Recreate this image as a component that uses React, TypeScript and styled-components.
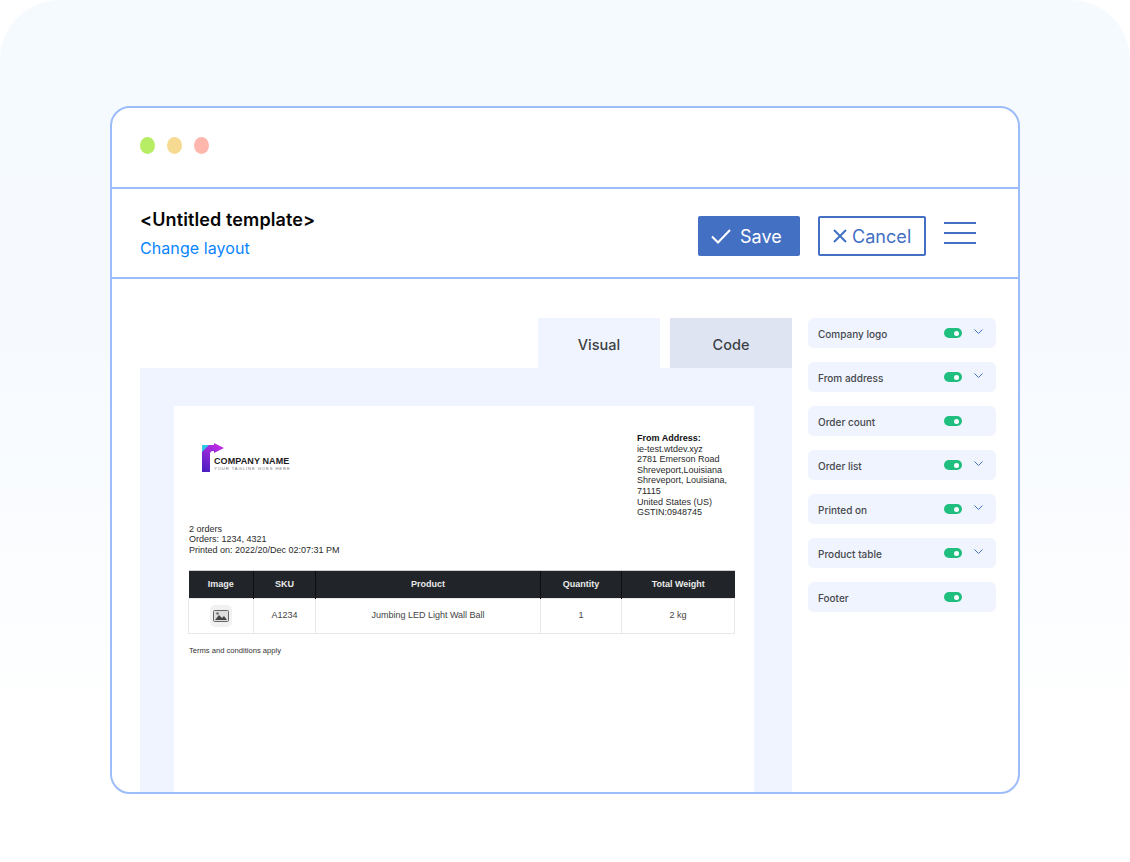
import React from "react";
import styled, { createGlobalStyle } from "styled-components";

const Global = createGlobalStyle`
  html, body { margin: 0; padding: 0; background: #fff; }
  body { font-family: Inter, "Liberation Sans", sans-serif; }
`;

const Page = styled.div`
  width: 1130px;
  height: 862px;
  box-sizing: border-box;
  padding: 106px 110px 68px;
  border-radius: 60px 60px 0 0;
  background: linear-gradient(180deg, #f5faff 0%, #f6faff 40%, #ffffff 85%);
  overflow: hidden;
`;

const Window = styled.div`
  height: 688px;
  box-sizing: border-box;
  display: flex;
  flex-direction: column;
  background: #fff;
  border: 2px solid #9dbdfa;
  border-radius: 20px;
  overflow: hidden;
`;

const TitleBar = styled.div`
  height: 81px;
  flex: none;
  box-sizing: border-box;
  padding: 29px 28px 0;
  display: flex;
  gap: 12px;
  align-items: flex-start;
  border-bottom: 2px solid #9dbdfa;
`;

const Dot = styled.span<{ $c: string }>`
  width: 15px;
  height: 17px;
  border-radius: 50%;
  background: ${(p) => p.$c};
`;

const Header = styled.div`
  height: 90px;
  flex: none;
  box-sizing: border-box;
  padding: 0 42px 0 28px;
  display: flex;
  align-items: center;
  justify-content: space-between;
  border-bottom: 2px solid #9dbdfa;
`;

const TitleBlock = styled.div`
  display: flex;
  flex-direction: column;
  gap: 7px;
`;

const Title = styled.div`
  font-size: 18px;
  line-height: 22px;
  font-weight: 600;
  letter-spacing: 0.11px;
  color: #050505;
`;

const LayoutLink = styled.a`
  font-size: 16px;
  line-height: 20px;
  letter-spacing: 0.08px;
  color: #0a84ff;
`;

const Actions = styled.div`
  display: flex;
  align-items: center;
  padding-top: 6px;
`;

const SaveButton = styled.button`
  width: 102px;
  height: 40px;
  margin-right: 18px;
  padding: 0 0 0 13px;
  border: 0;
  border-radius: 2px;
  background: #4470c4;
  color: #fff;
  font: 400 18px Inter, sans-serif;
  display: flex;
  align-items: center;
  gap: 9px;
`;

const CancelButton = styled.button`
  width: 108px;
  height: 40px;
  margin-right: 18px;
  padding: 0 0 0 13px;
  box-sizing: border-box;
  border: 2px solid #4470c4;
  border-radius: 2px;
  background: #fff;
  color: #4470c4;
  font: 400 18px Inter, sans-serif;
  letter-spacing: 0.05px;
  display: flex;
  align-items: center;
  gap: 5px;
`;

const Burger = styled.div`
  width: 32px;
  display: flex;
  flex-direction: column;
  gap: 8px;
  margin-bottom: 7px;
  span {
    height: 2px;
    background: #4470c4;
  }
`;

const Body = styled.div`
  flex: 1;
  min-height: 0;
  box-sizing: border-box;
  padding: 39px 22px 0 28px;
  display: flex;
  gap: 16px;
`;

const Main = styled.div`
  width: 652px;
  display: flex;
  flex-direction: column;
`;

const Tabs = styled.div`
  height: 50px;
  flex: none;
  display: flex;
  justify-content: flex-end;
  gap: 10px;
`;

const Tab = styled.div<{ $active?: boolean }>`
  width: 122px;
  box-sizing: border-box;
  padding-top: 3px;
  display: flex;
  align-items: center;
  justify-content: center;
  font-size: 14.5px;
  font-weight: 500;
  color: #3c3f44;
  background: ${(p) => (p.$active ? "#f0f4fe" : "#dfe4f3")};
`;

const Canvas = styled.div`
  flex: 1;
  min-height: 0;
  padding: 38px 38px 0 34px;
  background: #f0f4fe;
  display: flex;
`;

const Paper = styled.div`
  flex: 1;
  min-width: 0;
  box-sizing: border-box;
  padding: 27px 19px 0 15px;
  background: #fff;
  font-family: "Liberation Sans", Arial, sans-serif;
  font-size: 9px;
  line-height: 10.6px;
  color: #2a2a2a;
`;

const PaperTop = styled.div`
  display: flex;
  justify-content: space-between;
`;

const Logo = styled.div`
  display: flex;
  align-items: flex-end;
  margin: 10px 0 0 13px;
  height: 29px;
`;

const LogoText = styled.div`
  margin-left: -11px;
  display: flex;
  flex-direction: column;
`;

const CompanyName = styled.div`
  font-size: 9px;
  line-height: 10px;
  font-weight: 700;
  letter-spacing: 0.1px;
  color: #1b1b22;
`;

const Tagline = styled.div`
  font-size: 4.2px;
  line-height: 6px;
  letter-spacing: 0.9px;
  color: #77777d;
`;

const FromAddress = styled.div`
  width: 98px;
  strong {
    display: block;
    color: #111;
  }
`;

const OrderInfo = styled.div`
  margin-top: 6px;
`;

const Table = styled.table`
  width: 546px;
  margin: 14px 0 0 -1px;
  border-collapse: collapse;
  table-layout: fixed;
  text-align: center;
  font-size: 9px;
`;

const Th = styled.th<{ $w: number }>`
  width: ${(p) => p.$w}px;
  box-sizing: border-box;
  height: 28px;
  padding: 0;
  background: #212529;
  color: #e9e9ea;
  font-weight: 700;
  border-left: 1px solid #0c0e10;
  border-top: 1px solid #cfcfcf;
  &:first-child {
    border-left: 0;
  }
`;

const Td = styled.td`
  height: 34px;
  padding: 0;
  color: #444;
  border: 1px solid #e8e8e8;
`;

const Thumb = styled.span`
  display: inline-flex;
  align-items: center;
  justify-content: center;
  width: 22px;
  height: 22px;
  border-radius: 5px;
  background: #f1f1f1;
  vertical-align: middle;
`;

const Terms = styled.div`
  margin-top: 12px;
  font-size: 7.6px;
  line-height: 10px;
  color: #333;
`;

const Sidebar = styled.div`
  width: 188px;
  display: flex;
  flex-direction: column;
  gap: 14px;
`;

const Item = styled.div`
  height: 30px;
  box-sizing: border-box;
  padding: 0 10px;
  background: #f0f4fe;
  border-radius: 6px;
  display: flex;
  align-items: center;
  font-size: 10px;
  font-weight: 500;
  color: #45484d;
`;

const ItemLabel = styled.span`
  flex: 1;
  padding-top: 2px;
`;

const Toggle = styled.span`
  width: 18px;
  height: 10px;
  border-radius: 5px;
  background: #20bf7f;
  position: relative;
  &::after {
    content: "";
    position: absolute;
    right: 3px;
    top: 2.5px;
    width: 5px;
    height: 5px;
    border-radius: 50%;
    background: #fff;
  }
`;

const Chevron = styled.svg<{ $hidden: boolean }>`
  width: 9px;
  height: 5px;
  margin: -3px 3px 0 12px;
  visibility: ${(p) => (p.$hidden ? "hidden" : "visible")};
`;

const items: [string, boolean][] = [
  ["Company logo", true],
  ["From address", true],
  ["Order count", false],
  ["Order list", true],
  ["Printed on", true],
  ["Product table", true],
  ["Footer", false],
];

export default function App() {
  return (
    <>
      <Global />
      <Page>
        <Window>
          <TitleBar>
            <Dot $c="#b7ec65" />
            <Dot $c="#f7da92" />
            <Dot $c="#ffb6ad" />
          </TitleBar>
          <Header>
            <TitleBlock>
              <Title>{"<Untitled template>"}</Title>
              <LayoutLink>Change layout</LayoutLink>
            </TitleBlock>
            <Actions>
              <SaveButton>
                <svg width="20" height="15" viewBox="0 0 20 15" fill="none" stroke="#fff" strokeWidth="2">
                  <path d="M1 7.5 L7 13.5 L19 1" />
                </svg>
                Save
              </SaveButton>
              <CancelButton>
                <svg width="14" height="14" viewBox="0 0 14 14" fill="none" stroke="#4470c4" strokeWidth="2">
                  <path d="M1 1 L13 13 M13 1 L1 13" />
                </svg>
                Cancel
              </CancelButton>
              <Burger>
                <span />
                <span />
                <span />
              </Burger>
            </Actions>
          </Header>
          <Body>
            <Main>
              <Tabs>
                <Tab $active>Visual</Tab>
                <Tab>Code</Tab>
              </Tabs>
              <Canvas>
                <Paper>
                  <PaperTop>
                    <Logo>
                      <svg width="23" height="29" viewBox="0 0 23 29">
                        <defs>
                          <linearGradient id="lg" x1="0.7" y1="0" x2="0.2" y2="1">
                            <stop offset="0" stopColor="#c22ee6" />
                            <stop offset="1" stopColor="#4a1fc0" />
                          </linearGradient>
                        </defs>
                        <path d="M0 29 V8 Q0 2 6 2 H12 V0 L22 5 L12 10 V8 H11 Q8 8 8 11 V29 Z" fill="url(#lg)" />
                        <path d="M0 2 H7 L0 9 Z" fill="#2fc8e6" />
                      </svg>
                      <LogoText>
                        <CompanyName>COMPANY NAME</CompanyName>
                        <Tagline>YOUR TAGLINE GOES HERE</Tagline>
                      </LogoText>
                    </Logo>
                    <FromAddress>
                      <strong>From Address:</strong>
                      ie-test.wtdev.xyz
                      <br />
                      2781 Emerson Road
                      <br />
                      Shreveport,Louisiana
                      <br />
                      Shreveport, Louisiana,
                      <br />
                      71115
                      <br />
                      United States (US)
                      <br />
                      GSTIN:0948745
                    </FromAddress>
                  </PaperTop>
                  <OrderInfo>
                    2 orders
                    <br />
                    Orders: 1234, 4321
                    <br />
                    Printed on: 2022/20/Dec 02:07:31 PM
                  </OrderInfo>
                  <Table>
                    <thead>
                      <tr>
                        <Th $w={65}>Image</Th>
                        <Th $w={62}>SKU</Th>
                        <Th $w={225}>Product</Th>
                        <Th $w={81}>Quantity</Th>
                        <Th $w={113}>Total Weight</Th>
                      </tr>
                    </thead>
                    <tbody>
                      <tr>
                        <Td>
                          <Thumb>
                            <svg width="16" height="12" viewBox="0 0 16 12">
                              <rect x="0.5" y="0.5" width="15" height="11" rx="1" fill="#ddd" stroke="#666" />
                              <path d="M2 10 L6 5 L9 8 L11 6 L14 10 Z" fill="#444" />
                              <circle cx="4.5" cy="3.5" r="1.2" fill="#666" />
                            </svg>
                          </Thumb>
                        </Td>
                        <Td>A1234</Td>
                        <Td>Jumbing LED Light Wall Ball</Td>
                        <Td>1</Td>
                        <Td>2 kg</Td>
                      </tr>
                    </tbody>
                  </Table>
                  <Terms>Terms and conditions apply</Terms>
                </Paper>
              </Canvas>
            </Main>
            <Sidebar>
              {items.map(([label, chev]) => (
                <Item key={label}>
                  <ItemLabel>{label}</ItemLabel>
                  <Toggle />
                  <Chevron $hidden={!chev} viewBox="0 0 9 5" fill="none" stroke="#4470c4" strokeWidth="1">
                    <path d="M0.5 0.5 L4.5 4.5 L8.5 0.5" />
                  </Chevron>
                </Item>
              ))}
            </Sidebar>
          </Body>
        </Window>
      </Page>
    </>
  );
}
